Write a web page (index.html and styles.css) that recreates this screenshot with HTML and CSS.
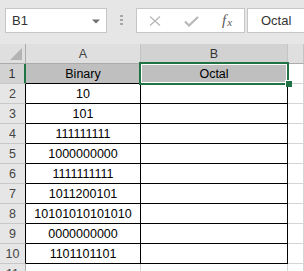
FILE: index.html
```html
<!DOCTYPE html>
<html>
<head>
<meta charset="utf-8">
<link rel="stylesheet" href="styles.css">
</head>
<body>
<div class="app">
  <div class="toolbar">
    <div class="namebox">
      <span class="nb-text">B1</span>
      <svg class="dd" width="8" height="5" viewBox="0 0 8 5"><path d="M0 0.5H8L4 4.5Z" fill="#6f6f6f"/></svg>
    </div>
    <div class="dots"><i></i><i></i><i></i></div>
    <div class="fxbox">
      <svg class="ic-x" width="12" height="10" viewBox="0 0 12 10"><path d="M1 0.5L11 9.5M11 0.5L1 9.5" stroke="#b8b8b8" stroke-width="1.3" fill="none"/></svg>
      <svg class="ic-ok" width="15" height="11" viewBox="0 0 15 11"><path d="M1 5.5L5 9.5L14 1" stroke="#b8b8b8" stroke-width="2.2" fill="none"/></svg>
      <span class="fx"><span class="fx-f">f</span><span class="fx-x">x</span></span>
    </div>
    <div class="input">Octal</div>
  </div>
  <div class="sheet">
    <div class="ch corner"><span class="tri"></span></div>
    <div class="ch">A</div>
    <div class="ch sel">B</div>
    <div class="ch">&nbsp;</div>

    <div class="rh sel">1</div>
    <div class="c d hd">Binary</div>
    <div class="c d hd b1">Octal<div class="selbox"></div><div class="handle"></div></div>
    <div class="c"></div>

    <div class="rh dl">2</div><div class="c d">10</div><div class="c d"></div><div class="c"></div>
    <div class="rh dl">3</div><div class="c d">101</div><div class="c d"></div><div class="c"></div>
    <div class="rh dl">4</div><div class="c d">111111111</div><div class="c d"></div><div class="c"></div>
    <div class="rh dl">5</div><div class="c d">1000000000</div><div class="c d"></div><div class="c"></div>
    <div class="rh dl">6</div><div class="c d">1111111111</div><div class="c d"></div><div class="c"></div>
    <div class="rh dl">7</div><div class="c d">1011200101</div><div class="c d"></div><div class="c"></div>
    <div class="rh dl">8</div><div class="c d">10101010101010</div><div class="c d"></div><div class="c"></div>
    <div class="rh dl">9</div><div class="c d">0000000000</div><div class="c d"></div><div class="c"></div>
    <div class="rh dl">10</div><div class="c d">1101101101</div><div class="c d"></div><div class="c"></div>
    <div class="rh">11</div><div class="c"></div><div class="c"></div><div class="c"></div>
  </div>
</div>
</body>
</html>
```
FILE: styles.css
```css
* { box-sizing: border-box; }
html, body {
  margin: 0;
  padding: 0;
}
body {
  width: 304px;
  height: 271px;
  overflow: hidden;
  background: #e6e6e6;
  font-family: "Liberation Sans", Arial, sans-serif;
  font-size: 12.5px;
  color: #000;
}
.app {
  width: 304px;
  height: 271px;
  display: flex;
  flex-direction: column;
  overflow: hidden;
}
.toolbar {
  height: 44px;
  flex: none;
  display: flex;
  align-items: flex-start;
  padding: 8px 0 0 5px;
  background: #e6e6e6;
}
.namebox {
  width: 102px;
  height: 25px;
  background: #fff;
  border: 1px solid #c6c6c6;
  display: flex;
  align-items: center;
  justify-content: space-between;
  padding: 0 6px 0 6px;
  font-size: 13px;
  color: #333;
}
.dd { display: block; margin-top: 1px; }
.dots {
  width: 3px;
  margin: 7px 13px 0 13px;
  display: flex;
  flex-direction: column;
  gap: 2px;
}
.dots i {
  display: block;
  width: 3px;
  height: 2px;
  background: #a8a8a8;
}
.fxbox {
  width: 109px;
  height: 25px;
  background: #fff;
  border: 1px solid #c6c6c6;
  display: flex;
  align-items: center;
  padding-left: 12px;
}
.ic-x { display: block; margin-top: 1px; }
.ic-ok { display: block; margin-left: 23px; margin-top: 1px; }
.fx {
  margin-left: 23px;
  font-family: "Liberation Serif", "Times New Roman", serif;
  font-style: italic;
  color: #5a5a5a;
  display: flex;
  align-items: baseline;
}
.fx-f { font-size: 15px; }
.fx-x { font-size: 11px; margin-left: 1px; position: relative; top: 1px; }
.input {
  flex: 1;
  height: 25px;
  margin-left: 2px;
  background: #fff;
  border: 1px solid #c6c6c6;
  border-right: none;
  display: flex;
  align-items: center;
  padding-left: 13px;
  font-size: 13px;
  color: #333;
}
.sheet {
  flex: 1;
  display: grid;
  grid-template-columns: 26px 115px 147px 16px;
  grid-auto-rows: 20px;
  background: #fff;
}
.ch {
  background: #dfdfdf;
  border-right: 1px solid #c4c4c4;
  border-bottom: 1px solid #ababab;
  display: flex;
  align-items: center;
  justify-content: center;
  color: #444;
  padding-top: 1px;
}
.ch.sel {
  background: #d2d2d2;
  border-bottom-color: #217346;
  color: #333;
}
.corner {
  position: relative;
  border-right-color: #ababab;
}
.tri {
  position: absolute;
  right: 3px;
  bottom: 3px;
  width: 0;
  height: 0;
  border-left: 12px solid transparent;
  border-bottom: 12px solid #b4b4b4;
}
.rh {
  background: #e6e6e6;
  border-right: 1px solid #ababab;
  border-bottom: 1px solid #c8c8c8;
  display: flex;
  align-items: center;
  justify-content: center;
  color: #444;
  padding-top: 1px;
}
.rh.dl { border-right-color: #000; }
.rh.sel {
  background: #d2d2d2;
  border-right: 2px solid #217346;
  color: #333;
}
.c {
  background: #fff;
  border-right: 1px solid #d4d4d4;
  border-bottom: 1px solid #d4d4d4;
  display: flex;
  align-items: center;
  justify-content: center;
  padding-top: 1px;
}
.c.d {
  border-right-color: #000;
  border-bottom-color: #000;
}
.c.hd { background: #bfbfbf; }
.b1 { position: relative; }
.selbox {
  position: absolute;
  left: -2px;
  top: -2px;
  width: 150px;
  height: 23px;
  border: 2px solid #217346;
  box-shadow: inset 0 0 0 1px #fff;
  pointer-events: none;
}
.handle {
  position: absolute;
  left: 144px;
  top: 16px;
  width: 7px;
  height: 7px;
  background: #217346;
  border: 1px solid #fff;
  border-right: none;
  border-bottom: none;
}
```
